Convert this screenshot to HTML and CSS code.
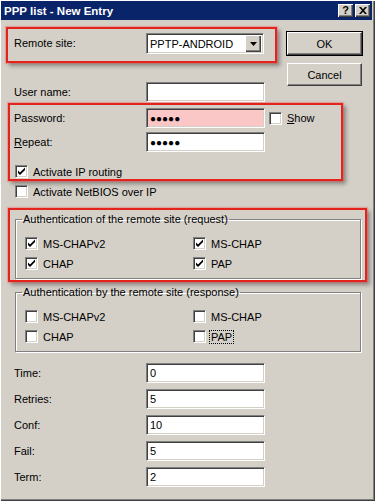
FILE: index.html
```html
<!DOCTYPE html>
<html lang="en">
<head>
    <meta charset="UTF-8">
    <meta name="viewport" content="width=device-width, initial-scale=1.0">
    <title>PPP list - New Entry</title>
    <link rel="stylesheet" href="styles.css">
</head>
<body>
    <div class="window">
        <div class="titlebar">
            <span class="title">PPP list - New Entry</span>
            <div class="caption-buttons">
                <span class="cap-btn cap-help">?</span>
                <span class="cap-btn">
                    <svg width="8" height="7" viewBox="0 0 8 7"><path d="M0 0h2l2 2.2L6 0h2L5 3.5L8 7H6L4 4.8L2 7H0l3-3.5z" fill="#000"/></svg>
                </span>
            </div>
        </div>

        <div class="client">
            <div class="top">
                <div class="top-left">
                    <div class="mark mark-site">
                        <span class="label">Remote site:</span>
                        <div class="combo">
                            <span class="combo-text">PPTP-ANDROID</span>
                            <span class="combo-btn">
                                <svg width="7" height="4" viewBox="0 0 7 4"><path d="M0 0h7L3.5 4z" fill="#000"/></svg>
                            </span>
                        </div>
                    </div>
                    <div class="row row-user">
                        <span class="label">User name:</span>
                        <div class="field"></div>
                    </div>
                </div>
                <div class="buttons">
                    <button class="btn btn-default">OK</button>
                    <button class="btn">Cancel</button>
                </div>
            </div>

            <div class="mark mark-pass">
                <div class="row">
                    <span class="label">Password:</span>
                    <div class="field field-pink dots">●●●●●</div>
                    <span class="check check-show">
                        <span class="box"></span>
                        <span><u>S</u>how</span>
                    </span>
                </div>
                <div class="row row-repeat">
                    <span class="label"><u>R</u>epeat:</span>
                    <div class="field dots">●●●●●</div>
                </div>
                <span class="check check-routing">
                    <span class="box checked"></span>
                    <span>Activate IP routing</span>
                </span>
            </div>

            <span class="check check-netbios">
                <span class="box"></span>
                <span>Activate NetBIOS over IP</span>
            </span>

            <div class="mark mark-req">
                <fieldset class="group">
                    <legend>Authentication of the remote site (request)</legend>
                    <div class="check-grid">
                        <span class="check"><span class="box checked"></span><span>MS-CHAPv2</span></span>
                        <span class="check"><span class="box checked"></span><span>MS-CHAP</span></span>
                        <span class="check"><span class="box checked"></span><span>CHAP</span></span>
                        <span class="check"><span class="box checked"></span><span>PAP</span></span>
                    </div>
                </fieldset>
            </div>

            <fieldset class="group group-resp">
                <legend>Authentication by the remote site (response)</legend>
                <div class="check-grid">
                    <span class="check"><span class="box"></span><span>MS-CHAPv2</span></span>
                    <span class="check"><span class="box"></span><span>MS-CHAP</span></span>
                    <span class="check"><span class="box"></span><span>CHAP</span></span>
                    <span class="check"><span class="box"></span><span class="focus">PAP</span></span>
                </div>
            </fieldset>

            <div class="timers">
                <div class="row"><span class="label">Time:</span><div class="field">0</div></div>
                <div class="row"><span class="label">Retries:</span><div class="field">5</div></div>
                <div class="row"><span class="label">Conf:</span><div class="field">10</div></div>
                <div class="row"><span class="label">Fail:</span><div class="field">5</div></div>
                <div class="row"><span class="label">Term:</span><div class="field">2</div></div>
            </div>
        </div>
    </div>
</body>
</html>
```

FILE: styles.css
```css
body {
    margin: 0;
    font-family: "Liberation Sans", Arial, sans-serif;
    font-size: 11px;
    color: #000;
    background: #d4d0c8;
}
.window {
    width: 375px;
    height: 501px;
    box-sizing: border-box;
    background: #d4d0c8;
    box-shadow: inset 1px 1px 0 #fff, inset -1px -1px 0 #404040, inset -2px -2px 0 #808080;
    overflow: hidden;
}

/* title bar */
.titlebar {
    height: 19px;
    margin: 1px 3px 0 1px;
    background: #0a246a;
    display: flex;
    align-items: center;
    justify-content: space-between;
}
.title {
    color: #fff;
    font-weight: bold;
    font-size: 11.5px;
    padding-left: 3px;
}
.caption-buttons {
    display: flex;
    gap: 2px;
    padding-right: 2px;
}
.cap-btn {
    width: 15px;
    height: 13px;
    box-sizing: border-box;
    background: #d4d0c8;
    box-shadow: inset 1px 1px 0 #fff, inset -1px -1px 0 #404040, inset -2px -2px 0 #808080;
    display: flex;
    align-items: center;
    justify-content: center;
}
.cap-help {
    font-weight: bold;
    font-size: 11px;
    line-height: 1;
}

/* shared controls */
.label {
    width: 132px;
    flex: none;
}
.row {
    display: flex;
    align-items: center;
    height: 20px;
}
.field {
    width: 119px;
    height: 20px;
    box-sizing: border-box;
    background: #fff;
    border: 1px solid;
    border-color: #808080 #fff #fff #808080;
    box-shadow: inset 1px 1px 0 #404040, inset -1px -1px 0 #d4d0c8;
    padding: 3px 0 0 3px;
    line-height: 13px;
}
.field-pink {
    background: #fbc6c6;
}
.dots {
    font-size: 10px;
    letter-spacing: 0;
    padding-top: 3px;
}
.check {
    display: flex;
    align-items: center;
    height: 13px;
    gap: 5px;
}
.box {
    width: 13px;
    height: 13px;
    box-sizing: border-box;
    flex: none;
    background: #fff;
    border: 1px solid;
    border-color: #808080 #fff #fff #808080;
    box-shadow: inset 1px 1px 0 #404040, inset -1px -1px 0 #d4d0c8;
}
.box.checked {
    background: #fff url("data:image/svg+xml,%3Csvg xmlns='http://www.w3.org/2000/svg' width='11' height='11' viewBox='0 0 11 11'%3E%3Cpath d='M2 4.5l2 2 5-5v2.4l-5 5-2-2z' fill='%23000'/%3E%3C/svg%3E") no-repeat center;
}
.btn {
    width: 75px;
    height: 23px;
    padding: 0;
    font: inherit;
    color: #000;
    background: #d4d0c8;
    border: 1px solid;
    border-color: #fff #404040 #404040 #fff;
    box-shadow: inset -1px -1px 0 #808080;
}
.btn-default {
    outline: 1px solid #000;
    outline-offset: 0;
}

/* red highlight frames */
.mark {
    box-sizing: border-box;
    border: 2px solid #e3231c;
    box-shadow: 0 0 1px 1px rgba(240, 90, 90, 0.35), 3px 3px 4px rgba(0, 0, 0, 0.35);
}

/* top */
.client {
    display: flex;
    flex-direction: column;
    align-items: flex-start;
}
.top {
    display: flex;
    align-items: flex-start;
    margin-top: 7px;
}
.top-left {
    margin-left: 6px;
    width: 271px;
}
.mark-site {
    height: 36px;
    padding: 4px 0 0 6px;
    display: flex;
    align-items: flex-start;
}
.mark-site .label {
    line-height: 21px;
}
.combo {
    width: 118px;
    height: 21px;
    box-sizing: border-box;
    background: #fff;
    border: 1px solid;
    border-color: #808080 #fff #fff #808080;
    box-shadow: inset 1px 1px 0 #404040, inset -1px -1px 0 #d4d0c8;
    display: flex;
    align-items: center;
    justify-content: space-between;
    padding: 2px;
}
.combo-text {
    padding-left: 1px;
}
.combo-btn {
    width: 16px;
    height: 17px;
    box-sizing: border-box;
    background: #d4d0c8;
    box-shadow: inset 1px 1px 0 #fff, inset -1px -1px 0 #404040, inset -2px -2px 0 #808080;
    display: flex;
    align-items: center;
    justify-content: center;
}
.row-user {
    margin-top: 19px;
    padding-left: 8px;
}
.buttons {
    display: flex;
    flex-direction: column;
    gap: 8px;
    margin: 5px 0 0 10px;
}

/* password block */
.mark-pass {
    width: 335px;
    height: 78px;
    margin: 1px 0 0 8px;
    padding: 3px 0 0 4px;
}
.check-show {
    margin-left: 4px;
}
.row-repeat {
    margin-top: 4px;
}
.check-routing {
    margin: 13px 0 0 1px;
}
.check-netbios {
    margin: 4px 0 0 15px;
}

/* authentication groups */
.mark-req {
    width: 359px;
    height: 74px;
    margin: 10px 0 0 8px;
    padding: 3px 0 0 5px;
}
.group {
    width: 346px;
    box-sizing: border-box;
    margin: 0;
    padding: 11px 0 8px 9px;
    border: 1px solid #808080;
    box-shadow: 1px 1px 0 #fff, inset 1px 1px 0 #fff;
}
.group legend {
    padding: 0 1px;
    margin-left: -3px;
    line-height: 13px;
}
.check-grid {
    display: grid;
    grid-template-columns: 168px 1fr;
    row-gap: 7px;
}
.focus {
    outline: 1px dotted #000;
    padding: 0 1px;
    margin-left: -1px;
}
.group-resp {
    margin: 4px 0 0 15px;
}

/* timers */
.timers {
    margin: 11px 0 0 14px;
    display: flex;
    flex-direction: column;
    gap: 6px;
}
```
